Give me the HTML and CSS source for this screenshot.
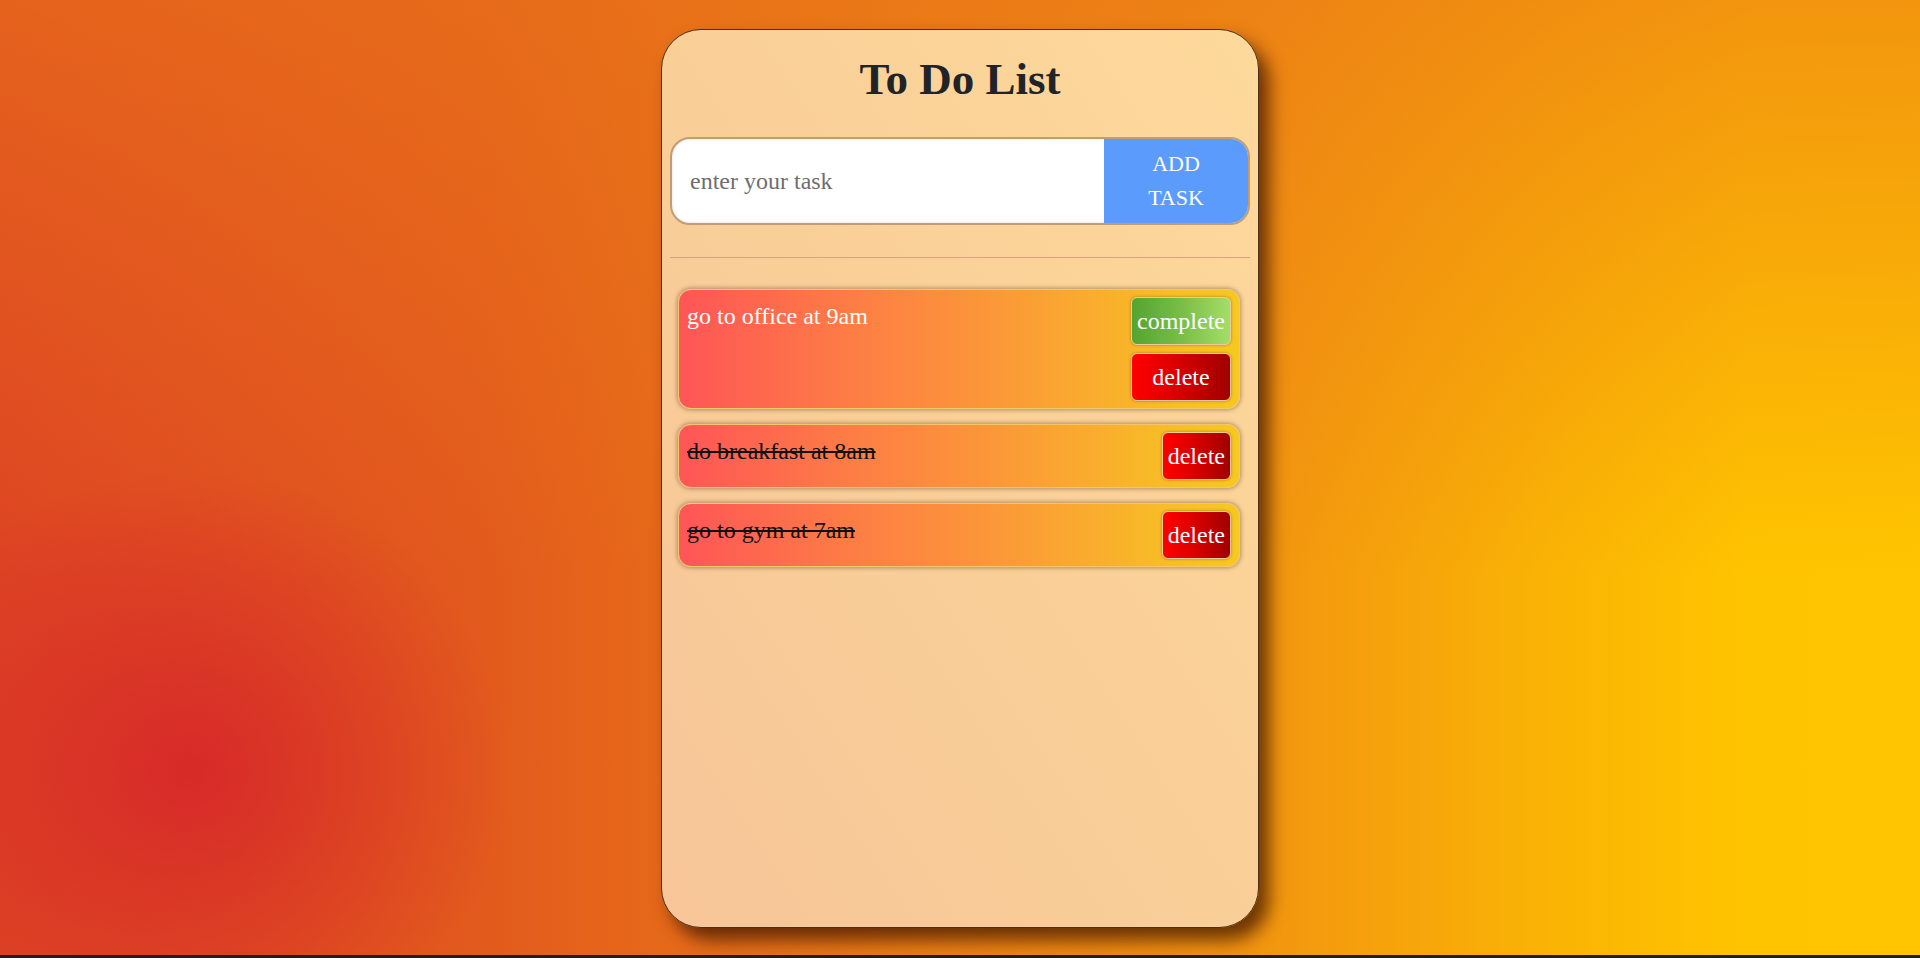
FILE: index.html
```html
<!DOCTYPE html>
<html lang="en">
<head>
<meta charset="utf-8">
<title>To Do List</title>
<link rel="stylesheet" href="styles.css">
</head>
<body>
<main class="card">
  <h1 class="title">To Do List</h1>
  <form class="entry">
    <input class="entry-input" type="text" placeholder="enter your task">
    <button class="entry-btn" type="button">ADD TASK</button>
  </form>
  <hr class="divider">
  <ul class="tasks">
    <li class="task">
      <span class="task-text">go to office at 9am</span>
      <div class="task-actions">
        <button class="btn btn-complete" type="button">complete</button>
        <button class="btn btn-delete" type="button">delete</button>
      </div>
    </li>
    <li class="task task-done">
      <span class="task-text">do breakfast at 8am</span>
      <div class="task-actions">
        <button class="btn btn-delete" type="button">delete</button>
      </div>
    </li>
    <li class="task task-done">
      <span class="task-text">go to gym at 7am</span>
      <div class="task-actions">
        <button class="btn btn-delete" type="button">delete</button>
      </div>
    </li>
  </ul>
</main>
</body>
</html>
```

FILE: styles.css
```css
* { box-sizing: border-box; }

html, body { margin: 0; padding: 0; }

body {
  height: 958px;
  overflow: hidden;
  font-family: "Liberation Serif", "Times New Roman", serif;
  border-bottom: 3px solid #1f1f1f;
  background:
    radial-gradient(ellipse 320px 300px at 190px 770px, rgba(214, 38, 42, 0.9), rgba(214, 38, 42, 0) 100%),
    linear-gradient(to bottom, rgba(234, 118, 24, 0.6), rgba(234, 118, 24, 0) 60%),
    linear-gradient(to right, #dd4423 0%, #e25a1d 25%, #ec7e14 48%, #f29410 65%, #fab404 81%, #ffc400 91%, #ffc500 100%);
  padding-top: 29px;
}

.card {
  width: 598px;
  height: 899px;
  margin: 0 auto;
  border: 1px solid #4a3018;
  border-radius: 40px;
  background: linear-gradient(to top right, #f7c599, #f9cf97 50%, #fed99c);
  box-shadow: 10px 12px 18px rgba(60, 20, 0, 0.75);
  padding: 0 8px;
}

.title {
  margin: 23px 0 32px;
  text-align: center;
  font-size: 45px;
  font-weight: bold;
  color: #202428;
  line-height: 52px;
}

.entry {
  display: flex;
  height: 88px;
  border: 2px solid #c29c74;
  border-radius: 20px;
  overflow: hidden;
  background: #fff;
  box-shadow: inset 0 0 3px rgba(0, 0, 0, 0.15);
}

.entry-input {
  flex: 1;
  min-width: 0;
  border: none;
  outline: none;
  padding: 0 0 0 18px;
  font-family: inherit;
  font-size: 24px;
  color: #333;
  background: transparent;
}

.entry-input::placeholder { color: #6e6e6e; }

.entry-btn {
  width: 144px;
  border: none;
  background: #5b9bfb;
  color: #fff;
  font-family: inherit;
  font-size: 22px;
  line-height: 34px;
  padding: 0 30px;
}

.divider {
  margin: 32px 0 31px;
  border: none;
  border-top: 1px solid #d5a47c;
}

.tasks {
  list-style: none;
  margin: 0;
  padding: 0 10px 0 8px;
  display: flex;
  flex-direction: column;
  gap: 15px;
}

.task {
  display: flex;
  justify-content: space-between;
  align-items: flex-start;
  padding: 7px 8px;
  border: 1px solid #f2c66a;
  border-radius: 13px;
  background: linear-gradient(to right, #ff5557, #fd7c45 30%, #fb9c36 60%, #f8c024 90%, #f7c81f);
  box-shadow: 0 0 4px 1px rgba(90, 60, 40, 0.45);
}

.task-text {
  padding-top: 6px;
  font-size: 24px;
  line-height: 27px;
  color: #fff;
}

.task-done .task-text {
  color: #111;
  text-decoration: line-through;
}

.task-actions {
  display: flex;
  flex-direction: column;
  gap: 8px;
}

.btn {
  font-family: inherit;
  font-size: 24px;
  line-height: 28px;
  color: #fff;
  padding: 9px 5px;
  border: 1px solid #ebcb9c;
  border-radius: 6px;
  box-shadow: 0 0 3px rgba(80, 40, 0, 0.45);
}

.btn-complete {
  background: linear-gradient(to right, #54a431, #7cc04a 55%, #a4de68);
}

.btn-delete {
  background: linear-gradient(to right, #ff0000, #e00000 40%, #a00000);
}
```
